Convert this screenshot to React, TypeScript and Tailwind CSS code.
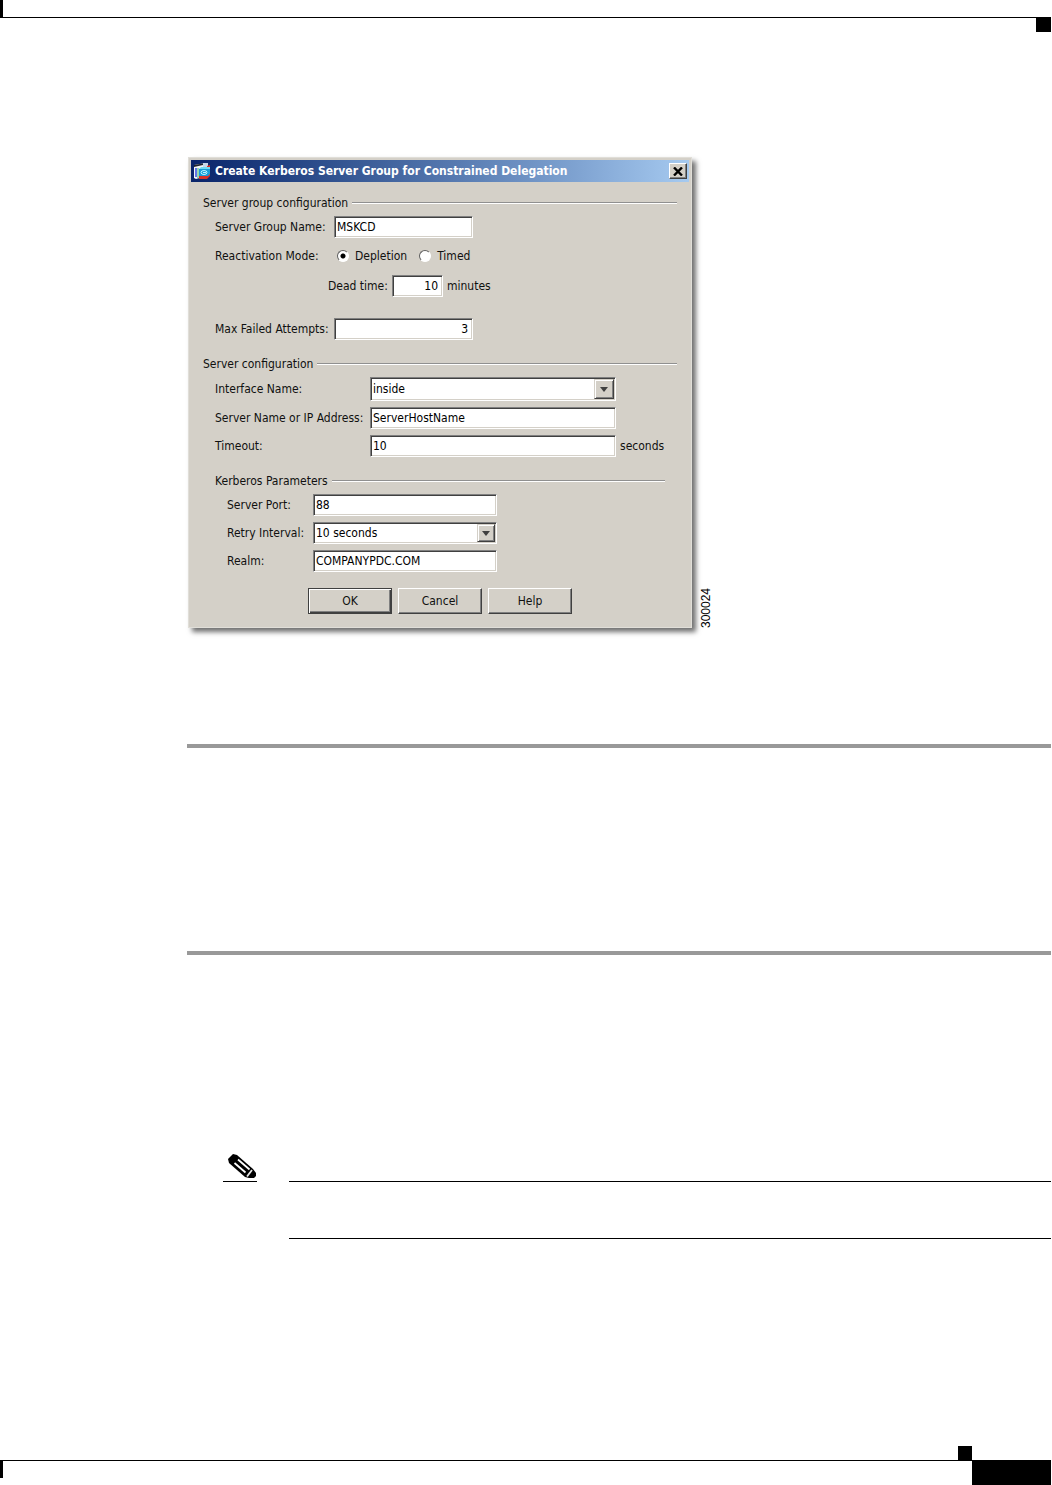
import React from "react";

const fieldClass =
  "h-[22px] min-w-0 border border-t-[#808080] border-l-[#808080] border-r-white border-b-white bg-white px-0.5 text-black shadow-[inset_1px_1px_0_#404040,inset_-1px_-1px_0_#d4d0c8] outline-none";

function Field({ id, value, className }: { id: string; value: string; className: string }) {
  return <input id={id} type="text" defaultValue={value} className={`${fieldClass} ${className}`} />;
}

function Dropdown({
  id,
  options,
  className,
  arrowClass,
}: {
  id: string;
  options: string[];
  className: string;
  arrowClass: string;
}) {
  return (
    <div className={`relative ${className}`}>
      <select id={id} className={`${fieldClass} h-full w-full appearance-none`}>
        {options.map((o) => (
          <option key={o}>{o}</option>
        ))}
      </select>
      <span
        className={`pointer-events-none absolute top-0.5 right-0.5 bottom-0.5 flex items-center justify-center border border-t-[#d4d0c8] border-l-[#d4d0c8] border-r-[#404040] border-b-[#404040] bg-[#d4d0c8] shadow-[inset_1px_1px_0_#ffffff,inset_-1px_-1px_0_#808080] ${arrowClass}`}
      >
        <svg width="8" height="5" viewBox="0 0 8 5" aria-hidden="true">
          <path d="M0 0H8L4 5Z" fill="#404040" />
        </svg>
      </span>
    </div>
  );
}

function Heading({ children }: { children: React.ReactNode }) {
  return (
    <legend className="flex h-4 w-full items-center gap-1">
      <span className="whitespace-nowrap">{children}</span>
      <span className="h-0.5 flex-1 border-t border-t-[#909090] bg-white" />
    </legend>
  );
}

function Radio({ label, defaultChecked }: { label: string; defaultChecked?: boolean }) {
  return (
    <label className="flex items-center gap-1.5">
      <input
        type="radio"
        name="reactivation"
        defaultChecked={defaultChecked}
        className="size-3 appearance-none rounded-full border border-t-[#606060] border-l-[#606060] border-r-white border-b-white bg-white checked:bg-[radial-gradient(circle,#000_2px,#fff_3px)]"
      />
      {label}
    </label>
  );
}

function PushButton({ label, primary }: { label: string; primary?: boolean }) {
  const edge = primary
    ? "border-[#404040] shadow-[inset_1px_1px_0_#ffffff,inset_-1px_-1px_0_#404040,inset_-2px_-2px_0_#808080]"
    : "border-t-white border-l-white border-r-[#404040] border-b-[#404040] shadow-[inset_-1px_-1px_0_#808080]";
  return (
    <button type="button" className={`h-[26px] w-[84px] border bg-[#d4d0c8] ${edge}`}>
      {label}
    </button>
  );
}

function AppIcon() {
  return (
    <svg width="18" height="18" viewBox="0 0 18 18" aria-hidden="true">
      <path d="M1 3L13 1V14L3 17L1 16Z" fill="#f4f4f8" />
      <path d="M1 3L10 1.500V3L1 5Z" fill="#20242c" />
      <path d="M3 6V15" stroke="#3048e0" strokeWidth="1.5" />
      <path d="M5 6V16" stroke="#40b868" strokeWidth="1" />
      <path d="M10 1H15V6H10Z" fill="#c8d8e8" />
      <path d="M6 14L17 11V14L14 17H6Z" fill="#d83028" />
      <path d="M14 4L17 3V6H14Z" fill="#d83028" />
      <path d="M6 7L17 6V12L15 14H6Z" fill="#189cd8" />
      <path d="M6 7L8 5H17V7Z" fill="#70dcf4" />
      <ellipse cx="11" cy="10.500" rx="3" ry="2" fill="none" stroke="#b8f4ff" />
      <path d="M10 10.500H13" stroke="#b8f4ff" />
    </svg>
  );
}

function Dialog() {
  return (
    <form
      aria-label="Create Kerberos Server Group for Constrained Delegation"
      className="w-full max-w-[504px] border border-[#e0ded8] bg-[#d4d0c8] p-0.5 pb-[13px] text-[#101010] shadow-[4px_4px_5px_#707070]"
    >
      <div className="flex h-[22px] items-center gap-1 bg-linear-to-r from-[#0a246a] to-[#a6caf0] px-0.5 text-white">
        <AppIcon />
        <h1 className="flex-1 font-bold whitespace-nowrap">
          Create Kerberos Server Group for Constrained Delegation
        </h1>
        <button
          type="button"
          aria-label="Close"
          className="flex h-4 w-[18px] items-center justify-center border border-t-white border-l-white border-r-[#404040] border-b-[#404040] bg-[#d4d0c8] shadow-[inset_-1px_-1px_0_#808080]"
        >
          <svg width="10" height="9" viewBox="0 0 10 9" aria-hidden="true">
            <path d="M1 0.5L9 8.5M9 0.5L1 8.5" stroke="#000" strokeWidth="2.4" />
          </svg>
        </button>
      </div>

      <div className="px-3">
        <fieldset className="mt-[13px]">
          <Heading>Server group configuration</Heading>
          <div className="flex flex-col pt-[5px] pl-3">
            <div className="flex items-center">
              <label htmlFor="group" className="w-[119px]">Server Group Name:</label>
              <Field id="group" value="MSKCD" className="w-[139px]" />
            </div>
            <div role="radiogroup" aria-labelledby="mode" className="mt-2 flex h-5 items-center">
              <span id="mode" className="w-[122px]">Reactivation Mode:</span>
              <div className="flex gap-3">
                <Radio label="Depletion" defaultChecked />
                <Radio label="Timed" />
              </div>
            </div>
            <div className="mt-[9px] ml-[113px] flex items-center">
              <label htmlFor="dead" className="w-16">Dead time:</label>
              <Field id="dead" value="10" className="w-[51px] pr-1 text-right" />
              <span className="ml-1">minutes</span>
            </div>
            <div className="mt-[21px] flex items-center">
              <label htmlFor="attempts" className="w-[119px] whitespace-nowrap">Max Failed Attempts:</label>
              <Field id="attempts" value="3" className="w-[139px] pr-1 text-right" />
            </div>
          </div>
        </fieldset>

        <fieldset className="mt-4">
          <Heading>Server configuration</Heading>
          <div className="flex flex-col gap-1.5 px-3 pt-[5px]">
            <div className="flex items-center">
              <label htmlFor="iface" className="w-[155px]">Interface Name:</label>
              <Dropdown id="iface" options={["inside", "outside"]} className="h-6 w-[246px]" arrowClass="w-5" />
            </div>
            <div className="flex items-center">
              <label htmlFor="host" className="w-[155px] whitespace-nowrap">Server Name or IP Address:</label>
              <Field id="host" value="ServerHostName" className="w-[246px]" />
            </div>
            <div className="flex items-center">
              <label htmlFor="timeout" className="w-[155px]">Timeout:</label>
              <Field id="timeout" value="10" className="w-[246px]" />
              <span className="ml-1">seconds</span>
            </div>
          </div>

          <fieldset className="mx-3 mt-4">
            <Heading>Kerberos Parameters</Heading>
            <div className="flex flex-col gap-1.5 pt-[5px] pl-3">
              <div className="flex items-center">
                <label htmlFor="port" className="w-[86px]">Server Port:</label>
                <Field id="port" value="88" className="w-[184px]" />
              </div>
              <div className="flex items-center">
                <label htmlFor="retry" className="w-[86px] whitespace-nowrap">Retry Interval:</label>
                <Dropdown id="retry" options={["10 seconds", "20 seconds"]} className="h-[22px] w-[184px]" arrowClass="w-[18px]" />
              </div>
              <div className="flex items-center">
                <label htmlFor="realm" className="w-[86px]">Realm:</label>
                <Field id="realm" value="COMPANYPDC.COM" className="w-[184px]" />
              </div>
            </div>
          </fieldset>
        </fieldset>

        <div className="mt-4 flex justify-center gap-1.5">
          <PushButton label="OK" primary />
          <PushButton label="Cancel" />
          <PushButton label="Help" />
        </div>
      </div>
    </form>
  );
}

function PencilIcon() {
  return (
    <svg width="30" height="26" viewBox="0 0 30 26" aria-hidden="true">
      <path d="M1 6L6 1L10 2L26 16L29 20V23L27 25H22L18 24L2 10Z" fill="#000" />
      <path d="M11 6.500L22.500 16.500" stroke="#fff" strokeWidth="1.800" />
      <path d="M7.500 10L18.500 19.500" stroke="#fff" strokeWidth="1.800" />
      <path d="M20 23.500L25 17" stroke="#e8e8e8" strokeWidth="1.800" />
    </svg>
  );
}

export default function App() {
  return (
    <div className="flex min-h-screen flex-col bg-white pr-px font-['DejaVu_Sans_Condensed','DejaVu_Sans',sans-serif] text-xs leading-4">
      <header>
        <div className="h-[18px] border-b border-black">
          <div className="h-full w-[3px] bg-black" />
        </div>
        <div className="ml-auto h-3.5 w-[15px] bg-black" />
      </header>

      <main className="mt-[125px] flex-1 pl-[187px]">
        <figure className="flex items-end gap-2 pl-px">
          <Dialog />
          <figcaption className="rotate-180 font-['Liberation_Sans',sans-serif] text-xs leading-3 text-black [writing-mode:vertical-rl]">
            300024
          </figcaption>
        </figure>
        <hr className="mt-[116px] border-t-4 border-[#999999]" />
        <hr className="mt-[203px] border-t-4 border-[#999999]" />
        <div className="mt-[198px] flex items-end pl-9">
          <div className="w-[34px] border-b border-black pb-0.5 pl-1">
            <PencilIcon />
          </div>
          <div className="ml-8 flex-1 border-b border-black" />
        </div>
        <div className="mt-14 ml-[102px] border-b border-black" />
      </main>

      <footer>
        <div className="flex justify-end pr-[79px]">
          <div className="size-3.5 bg-black" />
        </div>
        <div className="flex h-[25px] items-start justify-between border-t border-black">
          <div className="h-[17px] w-[3px] bg-black" />
          <div className="h-full w-[79px] bg-black" />
        </div>
      </footer>
    </div>
  );
}
